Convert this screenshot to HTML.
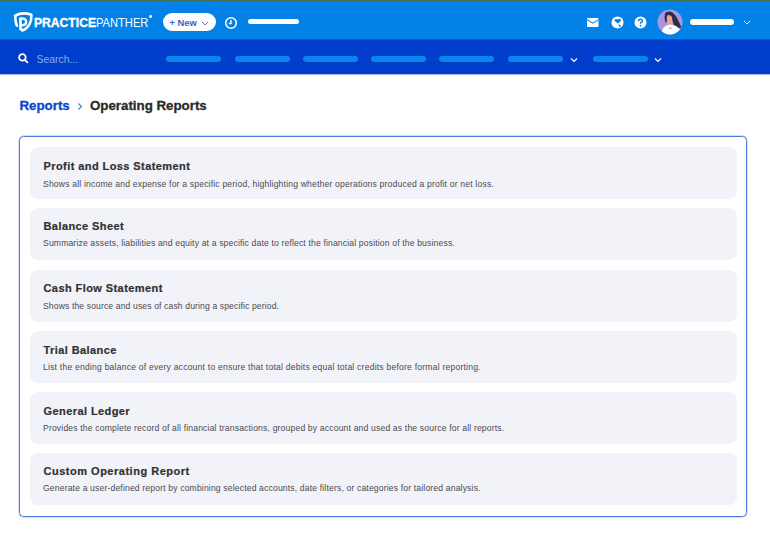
<!DOCTYPE html>
<html><head><meta charset="utf-8">
<style>
*{box-sizing:border-box;margin:0;padding:0}
html,body{width:770px;height:537px;overflow:hidden;background:#fff;font-family:"Liberation Sans",sans-serif}
.abs{position:absolute}
#strip{left:0;top:0;width:770px;height:2px;background:linear-gradient(#48724f 0,#48724f 1px,#50703f 1px,#50703f 2px)}
#top{left:0;top:2px;width:770px;height:37px;background:linear-gradient(#0085f0 0,#0085f0 1px,#0281e6 1px)}
#nav{left:0;top:39px;width:770px;height:35px;background:linear-gradient(#0354d6 0,#0354d6 1px,#003dcb 1px)}
.wbar{background:#fff;border-radius:3px}
.nbar{background:#0886ec;border-radius:3px;height:6px;top:56px;width:55px}
.crumb{top:98.3px;font-size:13.3px;font-weight:bold;line-height:16px;-webkit-text-stroke:0.3px currentColor}
#box{left:19px;top:136px;width:728px;height:381px;border:1px solid #4c7ade;border-radius:4.5px;box-shadow:0 0 0 0.4px rgba(76,122,222,0.5)}
.item{position:absolute;left:30px;width:707px;height:52px;background:#f2f3f8;border-radius:8px}
.item .t{position:absolute;left:13.5px;top:13.9px;font-size:11px;font-weight:bold;letter-spacing:0.42px;color:#303033;-webkit-text-stroke:0.2px currentColor;white-space:nowrap;line-height:13px}
.item .d{position:absolute;left:13px;top:32.2px;font-size:8.6px;letter-spacing:0.18px;color:#4a4a50;white-space:nowrap;line-height:10px}
</style></head><body>
<div id="strip" class="abs"></div>
<div id="top" class="abs"></div>
<div id="nav" class="abs"></div>
<div class="abs" style="left:0;top:74px;width:770px;height:2px;background:linear-gradient(#a9bbef 0,#a9bbef 1px,#f5f7fd 1px)"></div>

<!-- logo -->
<svg class="abs" style="left:11px;top:9px" width="24" height="24" viewBox="0 0 537 537">
<g fill="none" stroke="#fff" stroke-linecap="round" stroke-linejoin="round">
<path d="M90 150 Q265 60 455 130 C465 280 400 420 262 478" stroke-width="60"/>
<path d="M95 158 C95 250 105 320 130 375" stroke-width="58"/>
<path d="M212 218 V450 L250 470" stroke-width="60"/>
<path d="M212 218 C290 208 340 225 340 285 C340 345 290 366 232 366" stroke-width="56"/>
</g></svg>
<div class="abs" style="left:34.2px;top:17px;font-size:12.5px;line-height:12px;color:#fff;white-space:nowrap;font-weight:bold;-webkit-text-stroke:0.35px #fff;transform:scaleX(0.97);transform-origin:0 0">PRACTICE</div>
<div class="abs" style="left:95.6px;top:17px;font-size:12.5px;line-height:12px;color:#fff;white-space:nowrap;transform:scaleX(0.89);transform-origin:0 0">PANTHER</div>
<div class="abs" style="left:149px;top:15px;width:2.6px;height:2.6px;border-radius:50%;background:#dfeefc"></div>

<!-- new pill -->
<div class="abs" style="left:163px;top:13px;width:53px;height:18px;border-radius:9px;background:#fff"></div>
<div class="abs" style="left:169.5px;top:18.2px;font-size:9.4px;font-weight:bold;line-height:9px;color:#3a62cc;white-space:nowrap">+ New</div>
<svg class="abs" style="left:200.5px;top:20.5px" width="8" height="5" viewBox="0 0 8 5"><path d="M1 1 L4 4 L7 1" fill="none" stroke="#5a6fb0" stroke-width="0.9"/></svg>
<!-- clock -->
<svg class="abs" style="left:224.2px;top:15.5px" width="14" height="14" viewBox="0 0 14 14"><circle cx="7" cy="7" r="5.3" fill="none" stroke="#fff" stroke-width="1.6"/><path d="M7 4 V7.5 H4.8" fill="none" stroke="#fff" stroke-width="1.4"/></svg>
<div class="abs wbar" style="left:248px;top:19px;width:51px;height:5px"></div>

<!-- right icons -->
<svg class="abs" style="left:586.5px;top:17.8px" width="12" height="9" viewBox="0 0 12 9"><rect x="0" y="0" width="11.5" height="9" rx="0.8" fill="#fff"/><path d="M0 1.6 L5.75 5.2 L11.5 1.6" fill="none" stroke="#0281e8" stroke-width="1.1"/></svg>
<svg class="abs" style="left:611px;top:16px" width="13" height="13" viewBox="0 0 13 13"><circle cx="6.5" cy="6.5" r="6" fill="#fff"/><path d="M3.6 3.6 Q5 2.4 6.5 3.4 Q7.6 2.4 9.4 3 Q10.6 4.4 9.4 5.6 Q8 7.2 6.6 7.4 Q5.4 6 4.2 5.6 Q3.4 4.6 3.6 3.6Z M7.6 8.6 Q9 8.4 9.8 9.4 Q9.6 11 8.6 11.6 Q7.8 10.2 7.6 8.6Z" fill="#0281e8"/></svg>
<svg class="abs" style="left:634px;top:16px" width="13" height="13" viewBox="0 0 13 13"><circle cx="6.5" cy="6.5" r="6" fill="#fff"/><path d="M4.6 5.2 Q4.6 3.2 6.5 3.2 Q8.4 3.2 8.4 5 Q8.4 6.2 6.6 6.8 V7.8" fill="none" stroke="#0281e8" stroke-width="1.5"/><circle cx="6.6" cy="9.6" r="0.9" fill="#0281e8"/></svg>
<!-- avatar -->
<svg class="abs" style="left:657px;top:9px" width="26" height="26" viewBox="0 0 26 26">
<defs><clipPath id="ac"><circle cx="13" cy="13" r="12.5"/></clipPath></defs>
<circle cx="13" cy="13" r="12.5" fill="#a898e0"/>
<g clip-path="url(#ac)">
<path d="M8 4 Q12 1.5 15.5 3.5 Q19 6 21 11 Q23 15 24.5 18.5 L18 19.5 L15.5 12 Z" fill="#2c2b4c"/>
<path d="M9 6.5 Q13 5 15 8 L15.5 13 Q14 16 11 15 Q9 13 8.8 10 Z" fill="#eba58a"/>
<path d="M8 4 Q6.8 9 8.5 14 L10 12 Q9 8 11 5.5 Z" fill="#2c2b4c"/>
<rect x="12" y="13" width="3.5" height="4" fill="#eba58a"/>
<path d="M4 27 Q4.5 17 12 15.8 Q20 15.5 23 21 L24 27 Z" fill="#fff"/>
<rect x="12" y="18.8" width="2.5" height="0.7" fill="#555"/>
</g></svg>
<div class="abs wbar" style="left:690px;top:19px;width:44px;height:6px"></div>
<svg class="abs" style="left:743px;top:20px" width="8" height="5" viewBox="0 0 8 5"><path d="M1 1 L4 4 L7 1" fill="none" stroke="#fff" stroke-width="1"/></svg>

<!-- nav -->
<svg class="abs" style="left:17px;top:52px" width="12" height="12" viewBox="0 0 12 12"><circle cx="5.4" cy="5.4" r="3.3" fill="none" stroke="#fff" stroke-width="1.8"/><path d="M7.8 7.8 L10.4 10.4" stroke="#fff" stroke-width="1.8" stroke-linecap="round"/></svg>
<div class="abs" style="left:36.5px;top:53.5px;font-size:10.4px;line-height:12px;color:#86acef;white-space:nowrap">Search...</div>
<div class="abs nbar" style="left:166px"></div>
<div class="abs nbar" style="left:234.6px"></div>
<div class="abs nbar" style="left:302.9px"></div>
<div class="abs nbar" style="left:371.2px"></div>
<div class="abs nbar" style="left:439.4px"></div>
<div class="abs nbar" style="left:507.6px"></div>
<svg class="abs" style="left:570px;top:57px" width="8" height="6" viewBox="0 0 8 6"><path d="M1 1.5 L4 4.5 L7 1.5" fill="none" stroke="#fff" stroke-width="1.2"/></svg>
<div class="abs nbar" style="left:592.8px"></div>
<svg class="abs" style="left:654px;top:57px" width="8" height="6" viewBox="0 0 8 6"><path d="M1 1.5 L4 4.5 L7 1.5" fill="none" stroke="#fff" stroke-width="1.2"/></svg>

<!-- breadcrumb -->
<div class="abs crumb" style="left:19.5px;color:#0c46d0">Reports</div>
<svg class="abs" style="left:77px;top:102px" width="6" height="9" viewBox="0 0 6 9"><path d="M1.5 1.5 L4.5 4.5 L1.5 7.5" fill="none" stroke="#3a7be0" stroke-width="1.1"/></svg>
<div class="abs crumb" style="left:90px;color:#2a2a2c">Operating Reports</div>

<div id="box" class="abs"></div>
<div class="item" style="top:146.7px"><div class="t" style="top:13.6px">Profit and Loss Statement</div><div class="d" style="top:31.9px">Shows all income and expense for a specific period, highlighting whether operations produced a profit or net loss.</div></div>
<div class="item" style="top:207.8px"><div class="t" style="top:12.2px">Balance Sheet</div><div class="d" style="top:30.4px;letter-spacing:0.153px">Summarize assets, liabilities and equity at a specific date to reflect the financial position of the business.</div></div>
<div class="item" style="top:269.5px"><div class="t" style="top:12.8px">Cash Flow Statement</div><div class="d" style="top:31.2px;letter-spacing:0.123px">Shows the source and uses of cash during a specific period.</div></div>
<div class="item" style="top:330.7px"><div class="t" style="top:13.4px">Trial Balance</div><div class="d" style="top:31.0px;letter-spacing:0.209px">List the ending balance of every account to ensure that total debits equal total credits before formal reporting.</div></div>
<div class="item" style="top:391.8px"><div class="t" style="top:13.3px">General Ledger</div><div class="d" style="top:30.8px;letter-spacing:0.165px">Provides the complete record of all financial transactions, grouped by account and used as the source for all reports.</div></div>
<div class="item" style="top:452.5px"><div class="t" style="top:12.1px;letter-spacing:0.51px">Custom Operating Report</div><div class="d" style="top:30.4px;letter-spacing:0.157px">Generate a user-defined report by combining selected accounts, date filters, or categories for tailored analysis.</div></div>
</body></html>
